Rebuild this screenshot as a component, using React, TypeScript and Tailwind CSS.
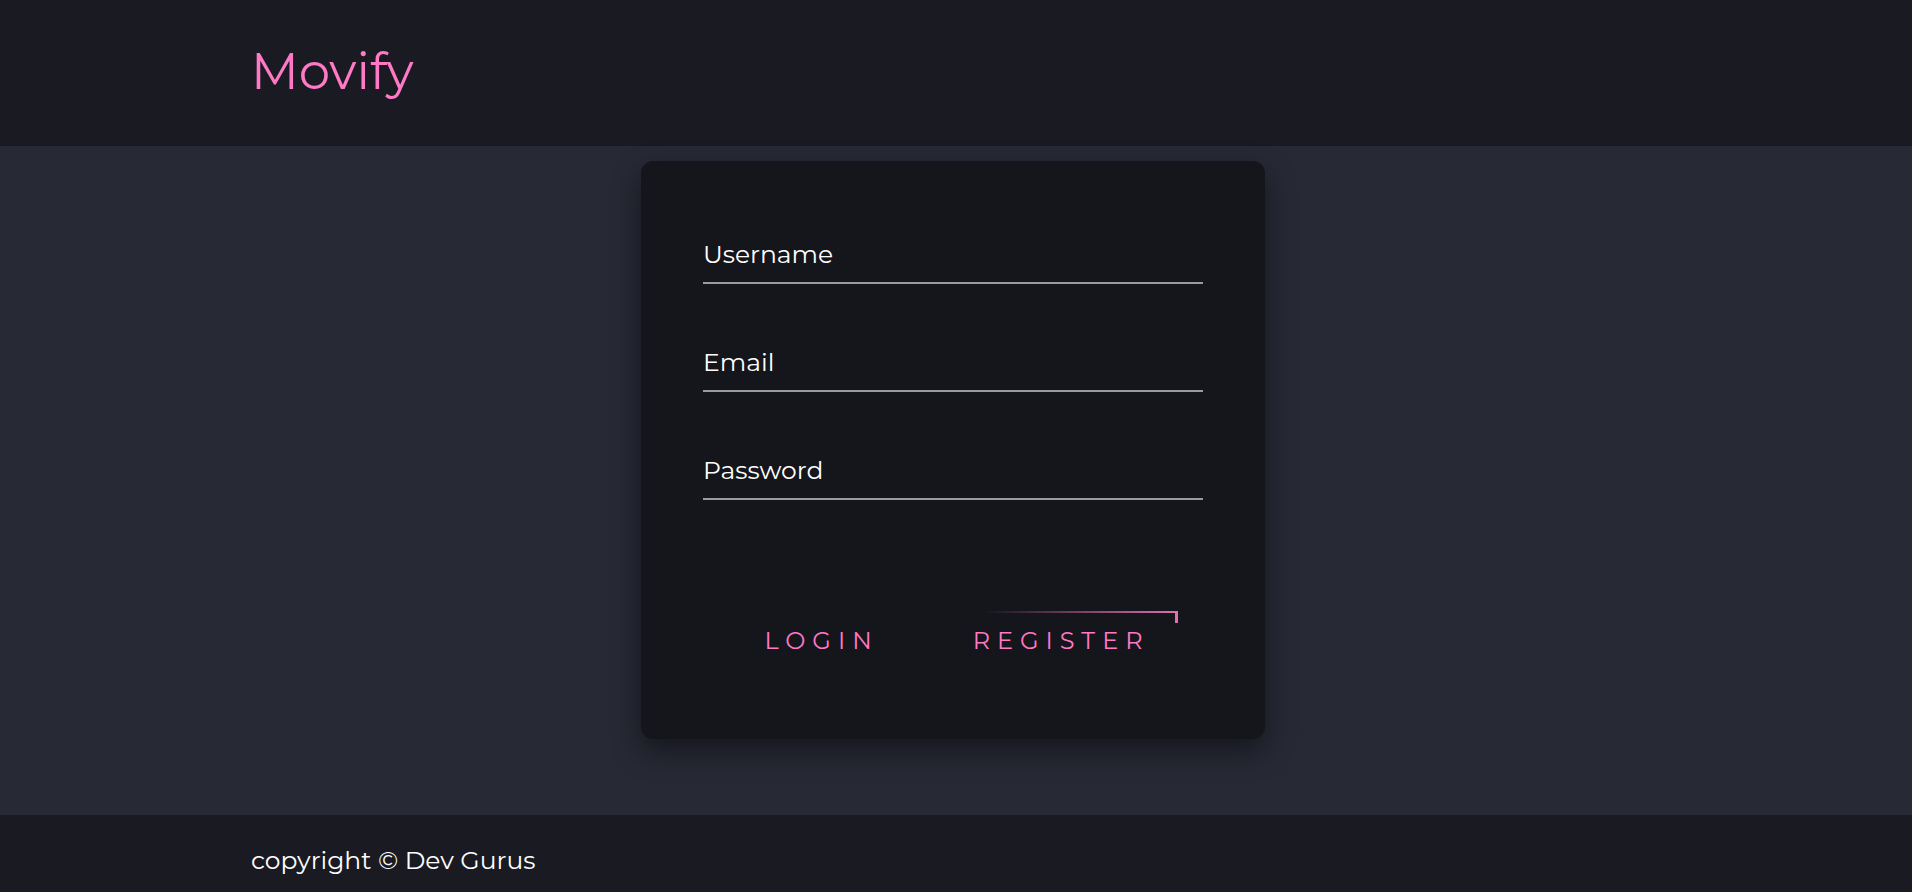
import React from 'react';

const FONT = "font-['Montserrat','DejaVu_Sans',sans-serif]";

function Field({ label, type }: { label: string; type: string }) {
  return (
    <input
      type={type}
      placeholder={label}
      className="block w-full bg-transparent border-0 border-b-2 border-[#9b9b9b] pb-[14px] text-[25px] leading-[28px] text-white placeholder:text-white outline-none"
    />
  );
}

export default function App() {
  return (
    <div className={`${FONT} min-h-[892px] flex flex-col bg-[#272935]`}>
      <header className="h-[146px] bg-[#1a1b22]">
        <div className="max-w-[1410px] mx-auto h-full flex items-center">
          <h1 className="text-[50px] leading-none text-[#ff79c6] -mt-[2px]">Movify</h1>
        </div>
      </header>

      <main className="h-[669px] flex justify-center">
        <form className="mt-[15px] mr-[6px] w-[624px] h-[578px] rounded-[12px] bg-[#15161b] px-[62px] pt-[79px] shadow-[0_12px_30px_rgba(0,0,0,0.45)]">
          <div className="flex flex-col gap-[64px]">
            <Field label="Username" type="text" />
            <Field label="Email" type="email" />
            <Field label="Password" type="password" />
          </div>

          <div className="mt-[111px] pl-[12px] flex justify-center gap-[46px]">
            <button
              type="button"
              className="px-6 py-4 text-[24px] leading-[28px] tracking-[7px] text-[#ff79c6]"
            >
              LOGIN
            </button>
            <button
              type="button"
              className="relative pl-6 pr-[28px] py-4 text-[24px] leading-[28px] tracking-[7px] text-[#ff79c6]"
            >
              <span className="absolute top-0 left-0 w-full h-[2px] bg-linear-to-r from-transparent from-15% via-[#ff79c6]/35 to-[#e070b0]" />
              <span className="absolute top-0 right-0 w-[3px] h-[12px] bg-[#e070b0]" />
              REGISTER
            </button>
          </div>
        </form>
      </main>

      <footer className="h-[77px] bg-[#1a1b22]">
        <div className="max-w-[1410px] mx-auto h-full pt-3 flex items-center text-[25px] leading-[28px] text-white">
          copyright © Dev Gurus
        </div>
      </footer>
    </div>
  );
}
